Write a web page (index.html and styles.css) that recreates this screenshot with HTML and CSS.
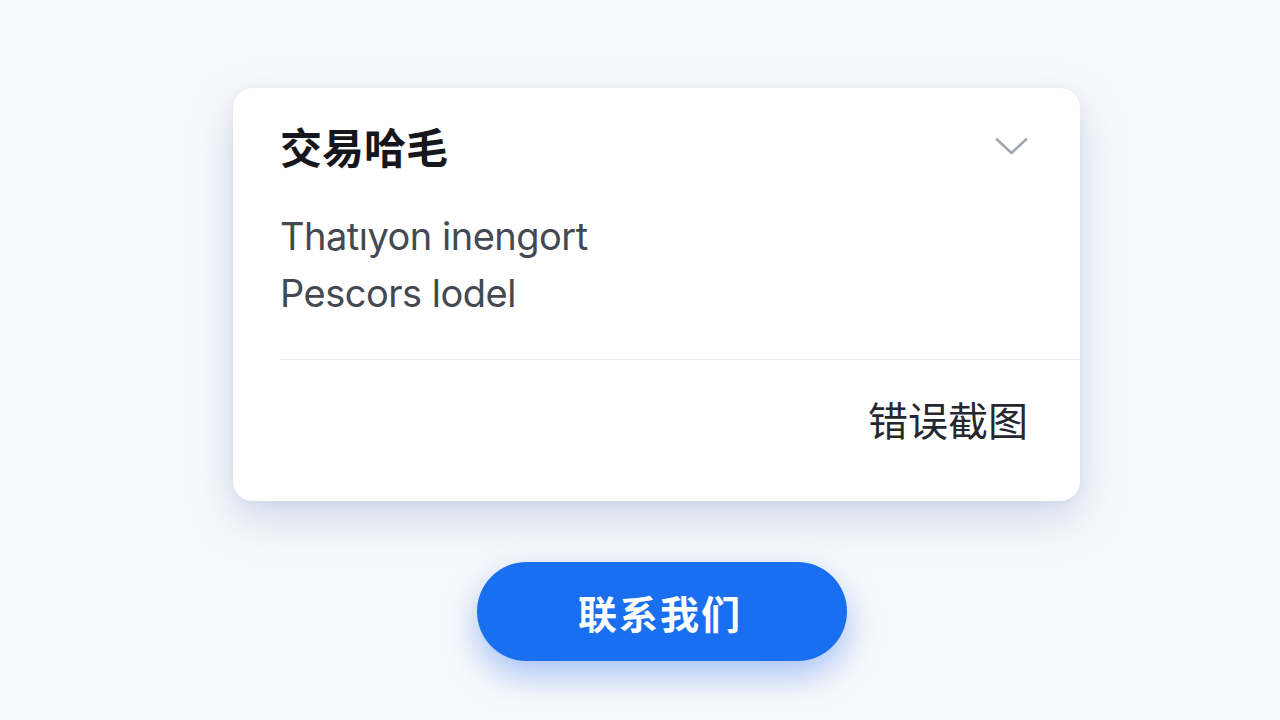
FILE: index.html
```html
<!DOCTYPE html>
<html lang="zh-CN">
<head>
    <meta charset="UTF-8">
    <meta name="viewport" content="width=device-width, initial-scale=1.0">
    <title>交易哈毛</title>
    <link rel="stylesheet" href="styles.css">
</head>
<body>

    <div class="card">
        <div class="card-head">
            <h2 class="card-title">交易哈毛</h2>
            <svg class="chevron" width="33" height="19" viewBox="0 0 33 19">
                <path d="M2 2.5 L16.5 16 L31 2.5" fill="none" stroke="#a3a8b0" stroke-width="2.6" stroke-linecap="round" stroke-linejoin="round"/>
            </svg>
        </div>

        <div class="card-body">
            <p>Thatıyon inengort</p>
            <p>Pescors lodel</p>
        </div>

        <div class="card-foot">
            <span class="foot-link">错误截图</span>
        </div>
    </div>

    <button class="contact-btn">联系我们</button>

</body>
</html>
```

FILE: styles.css
```css
body {
    margin: 0;
    height: 720px;
    background: #f8f9fb;
    font-family: Inter, "Noto Sans CJK SC", sans-serif;
    display: flex;
    flex-direction: column;
    align-items: flex-start;
    overflow: hidden;
}

.card {
    margin: 88px 0 0 233px;
    width: 847px;
    height: 413px;
    background: #fff;
    border-radius: 20px;
    box-shadow: 0 18px 44px rgba(115, 140, 200, 0.3), 0 2px 8px rgba(120, 145, 200, 0.12);
    display: flex;
    flex-direction: column;
}

.card-head {
    display: flex;
    justify-content: space-between;
    align-items: center;
    padding: 36px 52px 0 47px;
}

.card-title {
    margin: 0;
    font-size: 42px;
    line-height: 44px;
    font-weight: 700;
    color: #15171c;
    font-family: "Noto Sans CJK SC", sans-serif;
}

.card-body {
    margin-left: 47px;
    padding-top: 40px;
    height: 192px;
    box-sizing: border-box;
    border-bottom: 1px solid #e9ebef;
}

.card-body p {
    margin: 0;
    font-size: 38px;
    line-height: 57px;
    color: #434851;
    letter-spacing: -0.5px;
}

.card-foot {
    display: flex;
    justify-content: flex-end;
    padding: 35px 52px 0 0;
}

.foot-link {
    font-size: 40px;
    line-height: 48px;
    color: #25282e;
    font-family: "Noto Sans CJK SC", sans-serif;
}

.contact-btn {
    margin: 61px 0 0 477px;
    width: 370px;
    height: 99px;
    border: none;
    border-radius: 50px;
    background: #1a6ff0;
    color: #fff;
    font-family: "Noto Sans CJK SC", sans-serif;
    font-size: 39px;
    font-weight: 700;
    letter-spacing: 2px;
    padding-left: 2px;
    box-shadow: 0 14px 34px rgba(40, 110, 240, 0.4);
    cursor: pointer;
}
```
